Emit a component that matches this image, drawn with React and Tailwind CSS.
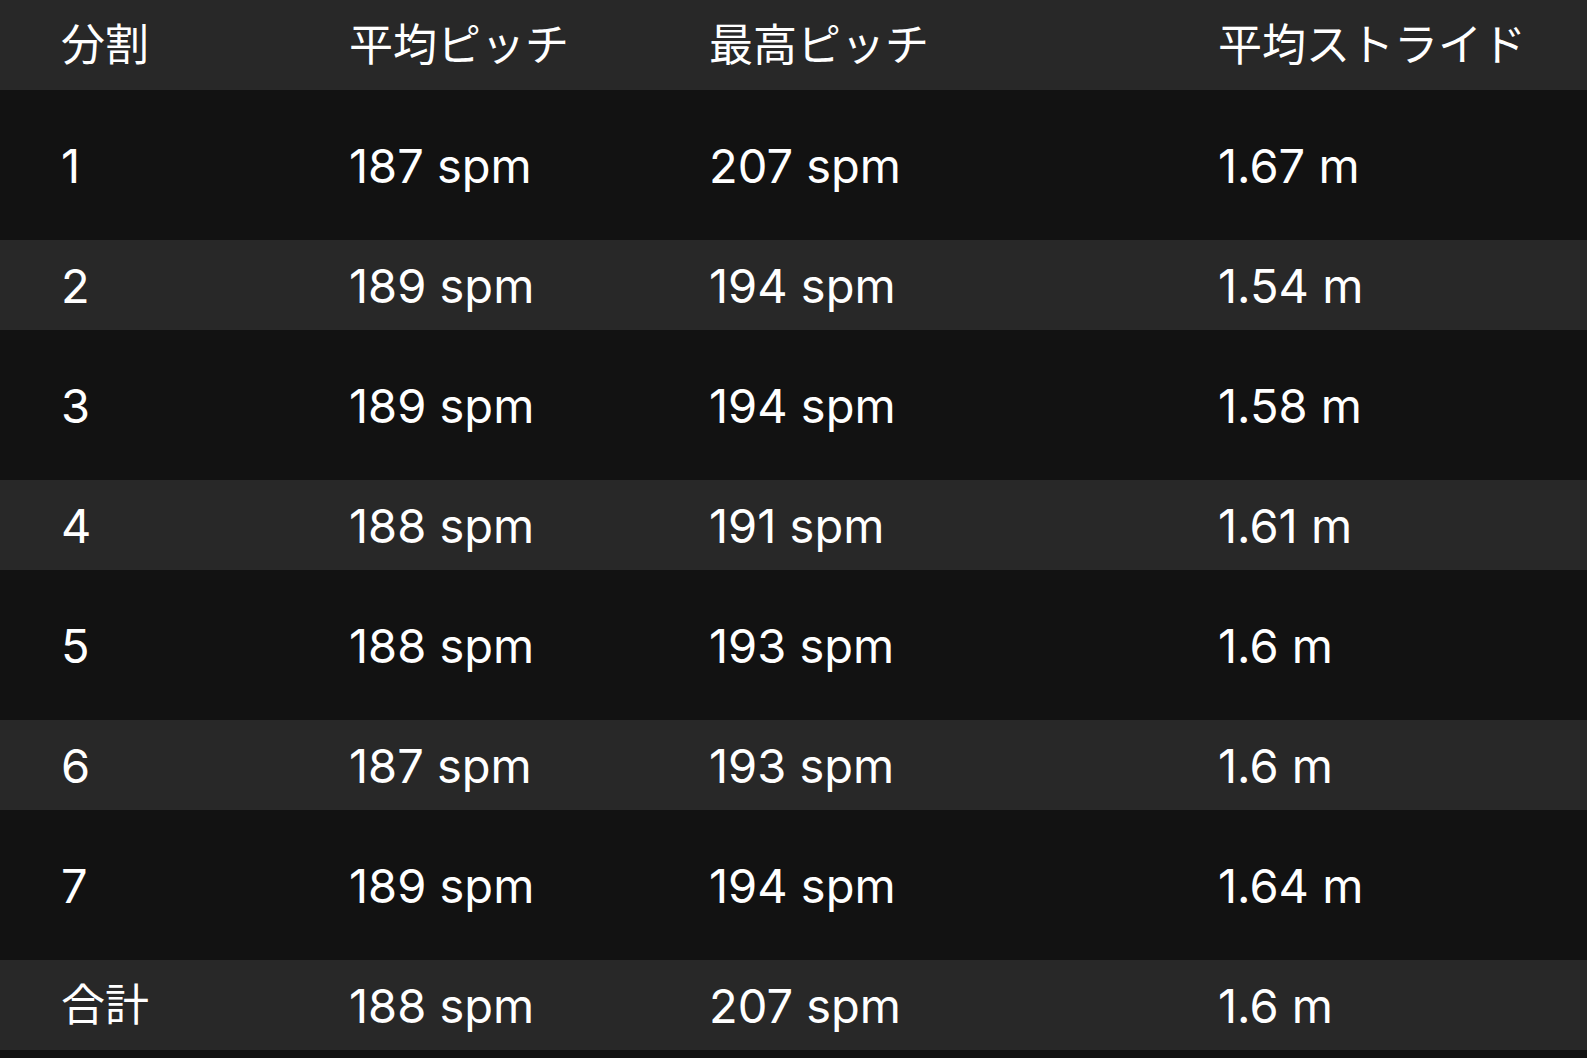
import React from "react";

const rows = [
  ["1", "187 spm", "207 spm", "1.67 m"],
  ["2", "189 spm", "194 spm", "1.54 m"],
  ["3", "189 spm", "194 spm", "1.58 m"],
  ["4", "188 spm", "191 spm", "1.61 m"],
  ["5", "188 spm", "193 spm", "1.6 m"],
  ["6", "187 spm", "193 spm", "1.6 m"],
  ["7", "189 spm", "194 spm", "1.64 m"],
];

function Row({ cells, className, firstClass = "" }) {
  return (
    <div className={`grid grid-cols-[288px_360px_509px_1fr] items-center pl-[61px] ${className}`}>
      {cells.map((c, i) => (
        <div key={i} className={`whitespace-nowrap ${i === 0 ? firstClass : ""}`}>{c}</div>
      ))}
    </div>
  );
}

export default function App() {
  return (
    <div
      className="w-full min-h-[1058px] bg-[#121212] text-white text-[47px] leading-none"
      style={{ fontFamily: 'Inter, "Noto Sans CJK JP", sans-serif' }}
    >
      <Row
        cells={["分割", "平均ピッチ", "最高ピッチ", "平均ストライド"]}
        className="h-[90px] bg-[#282828] text-[44px]"
      />
      {rows.map((r, i) => (
        <Row
          key={i}
          cells={r}
          className={i % 2 === 0 ? "h-[150px] bg-[#121212]" : "h-[90px] bg-[#282828]"}
        />
      ))}
      <Row
        cells={["合計", "188 spm", "207 spm", "1.6 m"]}
        className="h-[90px] bg-[#282828]"
        firstClass="text-[44px]"
      />
    </div>
  );
}
